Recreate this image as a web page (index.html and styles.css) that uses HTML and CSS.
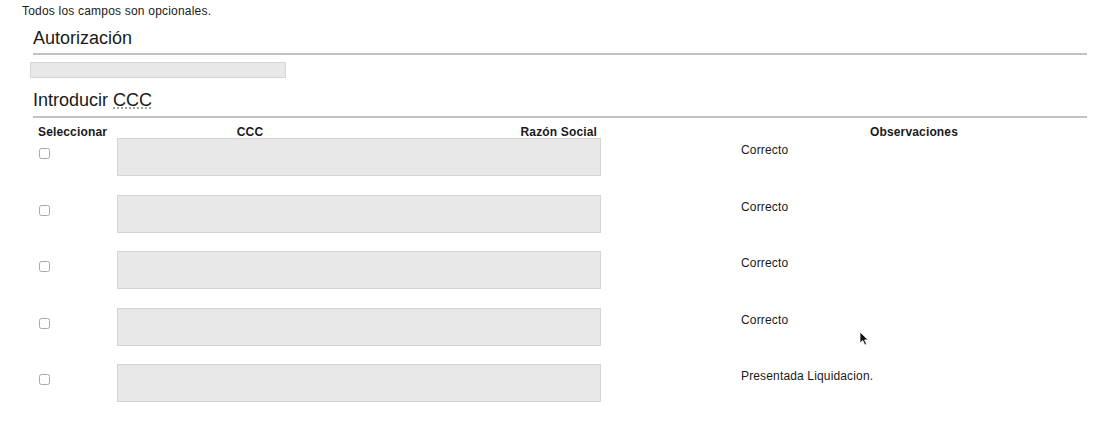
FILE: index.html
```html
<!DOCTYPE html>
<html lang="es">
<head>
    <meta charset="UTF-8">
    <meta name="viewport" content="width=device-width, initial-scale=1.0">
    <title>Autorización CCC</title>
    <link rel="stylesheet" href="styles.css">
</head>
<body>
    <p class="note">Todos los campos son opcionales.</p>

    <div class="form">
        <h2 class="section-title">Autorización</h2>
        <input class="auth-field" type="text">

        <h2 class="section-title">Introducir <abbr title="Código Cuenta de Cotización">CCC</abbr></h2>

        <div class="ccc-grid">
            <div class="head head-select">Seleccionar</div>
            <div class="head head-ccc"><abbr title="Código Cuenta de Cotización">CCC</abbr></div>
            <div class="head head-razon">Razón Social</div>
            <div class="head head-obs">Observaciones</div>

            <div class="cell cell-check"><input type="checkbox"></div>
            <div class="cell cell-input"><textarea></textarea></div>
            <div class="cell cell-obs">Correcto</div>

            <div class="cell cell-check"><input type="checkbox"></div>
            <div class="cell cell-input"><textarea></textarea></div>
            <div class="cell cell-obs">Correcto</div>

            <div class="cell cell-check"><input type="checkbox"></div>
            <div class="cell cell-input"><textarea></textarea></div>
            <div class="cell cell-obs">Correcto</div>

            <div class="cell cell-check"><input type="checkbox"></div>
            <div class="cell cell-input"><textarea></textarea></div>
            <div class="cell cell-obs">Correcto</div>

            <div class="cell cell-check"><input type="checkbox"></div>
            <div class="cell cell-input"><textarea></textarea></div>
            <div class="cell cell-obs">Presentada Liquidacion.</div>
        </div>
    </div>

    <svg class="pointer" width="12" height="16" viewBox="0 0 12 16">
        <path d="M1 1 L1 12 L3.8 9.6 L5.8 14 L7.6 13.2 L5.6 8.9 L9.2 8.9 Z" fill="#111" stroke="#fff" stroke-width="0.8"/>
    </svg>
</body>
</html>
```

FILE: styles.css
```css
body {
    margin: 0;
    font-family: "Liberation Sans", Arial, Helvetica, sans-serif;
    color: #1a1a1a;
    background-color: #fff;
    position: relative;
}

.note {
    margin: 0;
    padding: 4px 0 0 22px;
    font-size: 12px;
    line-height: 14px;
    letter-spacing: 0.2px;
}

.form {
    margin-left: 33px;
    width: 1054px;
}

.section-title {
    margin: 9px 0 0;
    padding-bottom: 4px;
    font-size: 18px;
    font-weight: normal;
    line-height: 22px;
    border-bottom: 2px solid #c2c2c2;
}

.section-title + .auth-field + .section-title {
    margin-top: 11px;
    padding-bottom: 5px;
}

abbr {
    text-decoration: underline dotted #999;
    text-underline-offset: 2px;
}

.auth-field {
    display: block;
    box-sizing: border-box;
    width: 256px;
    height: 16px;
    margin: 7px 0 0 -3px;
    padding: 0;
    background-color: #e8e8e8;
    border: 1px solid #d6d6d6;
}

.ccc-grid {
    display: grid;
    grid-template-columns: 80px 274px 214px 140px 346px;
    grid-auto-rows: 56.5px;
    grid-template-rows: 14px;
    margin-top: 6px;
    font-size: 12px;
    letter-spacing: 0.15px;
}

.head {
    font-weight: bold;
    line-height: 14px;
    padding-top: 1px;
}

.head-select {
    padding-left: 5px;
}

.head-ccc {
    text-align: center;
}

.head-razon {
    text-align: right;
    padding-right: 4px;
}

.head-obs {
    grid-column: 5;
    text-align: center;
}

.cell-check {
    padding: 10px 0 0 6px;
}

.cell-check input {
    appearance: none;
    display: block;
    box-sizing: border-box;
    width: 11px;
    height: 11px;
    margin: 0;
    background-color: #fff;
    border: 1px solid #a8a8a8;
    border-radius: 2.5px;
}

.cell-input {
    grid-column: 2 / 4;
    padding-left: 4px;
}

.cell-input textarea {
    display: block;
    box-sizing: border-box;
    width: 484px;
    height: 38px;
    margin: 0;
    resize: none;
    background-color: #e8e8e8;
    border: 1px solid #d4d4d4;
}

.cell-obs {
    grid-column: 5;
    padding-top: 5px;
    line-height: 14px;
}

/* mouse pointer resting over the list */
.pointer {
    position: absolute;
    left: 859px;
    top: 331px;
}
```
